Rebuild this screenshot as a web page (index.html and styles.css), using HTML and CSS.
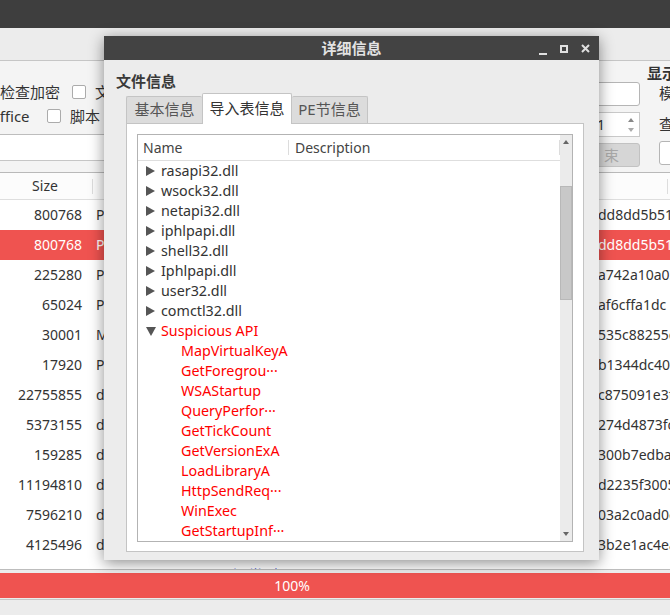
FILE: index.html
```html
<!DOCTYPE html>
<html>
<head>
<meta charset="utf-8">
<link rel="stylesheet" href="styles.css">
</head>
<body>
<div class="app">
  <div class="topbar"></div>
  <div class="toolbar"></div>
  <div class="filters">
    <div class="leftcol">
      <div class="opts">
        <div class="opt-row">
          <span class="lbl l1">检查加密</span><span class="cb"></span><span class="lbl">文件</span>
        </div>
        <div class="opt-row shift">
          <span class="lbl l2">Office</span><span class="cb"></span><span class="lbl">脚本</span>
        </div>
      </div>
      <div class="search"></div>
    </div>
    <div class="ctrlcol">
      <div class="inp"></div>
      <div class="spin"><span class="spinval">1</span><span class="spinarrows"><i class="up"></i><i class="down"></i></span></div>
      <div class="btn">结束</div>
    </div>
    <div class="showcol">
      <div class="gtitle">显示</div>
      <div class="gitem">模式</div>
      <div class="gitem g2">查看</div>
      <div class="gbox"></div>
    </div>
  </div>
  <div class="table">
    <div class="thead">
      <div class="c-size">Size</div>
      <div class="c-type"><span class="hdiv"></span></div>
      <div class="c-hash"><span class="hdiv end"></span></div>
    </div>
    <div class="trow"><div class="c-size">800768</div><div class="c-type">PE32 executable</div><div class="c-hash">dd8dd5b51f</div></div>
    <div class="trow sel"><div class="c-size">800768</div><div class="c-type">PE32 executable</div><div class="c-hash">dd8dd5b51f</div></div>
    <div class="trow"><div class="c-size">225280</div><div class="c-type">PE32 executable</div><div class="c-hash">a742a10a03</div></div>
    <div class="trow"><div class="c-size">65024</div><div class="c-type">PE32 executable</div><div class="c-hash">af6cffa1dc</div></div>
    <div class="trow"><div class="c-size">30001</div><div class="c-type">MS-DOS executable</div><div class="c-hash">535c88255c</div></div>
    <div class="trow"><div class="c-size">17920</div><div class="c-type">PE32 executable</div><div class="c-hash">b1344dc40c</div></div>
    <div class="trow"><div class="c-size">22755855</div><div class="c-type">data</div><div class="c-hash">c875091e3f</div></div>
    <div class="trow"><div class="c-size">5373155</div><div class="c-type">data</div><div class="c-hash">274d4873fc</div></div>
    <div class="trow"><div class="c-size">159285</div><div class="c-type">data</div><div class="c-hash">300b7edba1</div></div>
    <div class="trow"><div class="c-size">11194810</div><div class="c-type">data</div><div class="c-hash">d2235f3005</div></div>
    <div class="trow"><div class="c-size">7596210</div><div class="c-type">data</div><div class="c-hash">03a2c0ad0e</div></div>
    <div class="trow"><div class="c-size">4125496</div><div class="c-type">data</div><div class="c-hash">3b2e1ac4ea</div></div>
    <div class="trow"><div class="c-size"></div><div class="c-type"><span class="blue">可疑类型</span></div><div class="c-hash"></div></div>
  </div>
  <div class="progress"><div class="bar">100%</div></div>
  <div class="status"></div>
</div>

<div class="dialog">
  <div class="dtitle">
    <span class="dname">详细信息</span>
    <span class="wbtns">
      <span class="wmin"></span>
      <span class="wmax"></span>
      <svg class="wclose" width="9" height="9" viewBox="0 0 9 9"><path d="M1 1L8 8M8 1L1 8" stroke="#e0e0e0" stroke-width="2"/></svg>
    </span>
  </div>
  <div class="dbody">
    <div class="dlabel">文件信息</div>
    <div class="tabs">
      <div class="tab t1">基本信息</div>
      <div class="tab t2 active">导入表信息</div>
      <div class="tab t3">PE节信息</div>
    </div>
    <div class="pane">
      <div class="tree">
        <div class="tmain">
          <div class="theader">
            <div class="hname">Name</div>
            <div class="hdesc">Description</div>
          </div>
          <div class="tlist">
            <div class="node"><span class="tri closed"></span>rasapi32.dll</div>
            <div class="node"><span class="tri closed"></span>wsock32.dll</div>
            <div class="node"><span class="tri closed"></span>netapi32.dll</div>
            <div class="node"><span class="tri closed"></span>iphlpapi.dll</div>
            <div class="node"><span class="tri closed"></span>shell32.dll</div>
            <div class="node"><span class="tri closed"></span>Iphlpapi.dll</div>
            <div class="node"><span class="tri closed"></span>user32.dll</div>
            <div class="node"><span class="tri closed"></span>comctl32.dll</div>
            <div class="node red"><span class="tri open"></span>Suspicious API</div>
            <div class="node red child">MapVirtualKeyA</div>
            <div class="node red child">GetForegrou···</div>
            <div class="node red child">WSAStartup</div>
            <div class="node red child">QueryPerfor···</div>
            <div class="node red child">GetTickCount</div>
            <div class="node red child">GetVersionExA</div>
            <div class="node red child">LoadLibraryA</div>
            <div class="node red child">HttpSendReq···</div>
            <div class="node red child">WinExec</div>
            <div class="node red child">GetStartupInf···</div>
          </div>
        </div>
        <div class="vscroll">
          <span class="sarrow sup"></span>
          <div class="strack"><div class="shandle"></div></div>
          <span class="sarrow sdown"></span>
        </div>
      </div>
    </div>
  </div>
</div>
</body>
</html>
```

FILE: styles.css
```css
* { box-sizing: border-box; }
body {
  margin: 0;
  width: 670px;
  height: 615px;
  overflow: hidden;
  position: relative;
  font-family: "Noto Sans", "Noto Sans CJK SC", sans-serif;
  font-size: 14px;
  color: #333;
  background: #ececec;
}
.app { display: flex; flex-direction: column; height: 615px; }
.topbar { height: 28px; flex: none; background: #3e3e3e; }
.toolbar { height: 33px; flex: none; background: #ececec; border-bottom: 1px solid #c6c6c6; }

.filters { height: 111px; flex: none; display: flex; background: #f4f4f4; font-size: 15px; }
.leftcol { width: 565px; flex: none; display: flex; flex-direction: column; }
.opts {
  height: 74px;
  padding-top: 21px;
  border-bottom: 1px solid #bdbdbd;
  display: flex; flex-direction: column; gap: 4px;
}
.opt-row { display: flex; align-items: center; height: 20px; line-height: 20px; white-space: nowrap; }
.opt-row.shift { margin-left: -12px; }
.lbl { flex: none; }
.lbl.l1 { width: 72px; }
.lbl.l2 { width: 59px; }
.cb {
  width: 14px; height: 14px; flex: none;
  border: 1px solid #ababab; border-radius: 2px; background: #fff;
  margin-right: 9px;
}
.search { height: 26px; background: #fff; border-bottom: 1px solid #c6c6c6; }

.ctrlcol { width: 75px; flex: none; padding: 21px 0 0 7px; display: flex; flex-direction: column; gap: 6px; }
.inp { height: 24px; border: 1px solid #b5b5b5; border-radius: 3px; background: #fff; }
.spin {
  height: 25px; border: 1px solid #c9c9c9; background: #fff;
  display: flex; align-items: center; justify-content: space-between;
  padding-left: 24px; line-height: 20px; font-size: 14px;
}
.spinarrows { width: 12px; height: 23px; display: flex; flex-direction: column; justify-content: center; gap: 6px; align-items: center; margin-right: 2px; }
.spinarrows i { display: block; width: 0; height: 0; border-left: 3px solid transparent; border-right: 3px solid transparent; }
.spinarrows .up { border-bottom: 4px solid #888; }
.spinarrows .down { border-top: 4px solid #aaa; }
.btn {
  height: 24px; border: 1px solid #c2c2c2; border-radius: 3px; background: #d6d6d6;
  color: #a8a8a8; text-align: right; line-height: 22px; padding-right: 13px; letter-spacing: 7px;
}
.showcol { flex: none; width: 30px; padding: 2px 0 0 7px; white-space: nowrap; }
.gtitle { font-weight: bold; line-height: 20px; }
.gitem { padding-left: 12px; line-height: 20px; }
.gitem.g2 { margin-top: 11px; }
.gbox { margin: 7px 0 0 12px; width: 40px; height: 24px; border: 1px solid #b5b5b5; border-radius: 3px; background: #fff; }

.table { height: 398px; flex: none; overflow: hidden; background: #fff; border-top: 1px solid #b9b9b9; border-bottom: 1px solid #bdbdbd; }
.thead, .trow { display: flex; }
.thead { height: 27px; line-height: 26px; border-bottom: 1px solid #dedede; background: #fcfcfc; }
.trow { height: 30px; line-height: 30px; white-space: nowrap; }
.trow.sel { background: #ef5350; color: #fff; }
.c-size { width: 92px; text-align: right; padding-right: 10px; flex: none; }
.thead .c-size { text-align: center; padding-right: 2px; }
.c-type { flex: 1; padding-left: 4px; overflow: hidden; position: relative; }
.c-hash { width: 72px; flex: none; overflow: hidden; position: relative; }
.hdiv { position: absolute; left: 0; top: 6px; width: 1px; height: 15px; background: #ddd; }
.hdiv.end { left: 69px; }
.blue { color: #1f3fcf; margin-left: 122px; font-size: 15px; }

.progress { height: 30px; flex: none; padding: 3px 0 1px; background: #ececec; border-bottom: 1px solid #c6c6c6; }
.bar { height: 25px; background: #ef5350; color: #fff; font-size: 14px; line-height: 25px; text-align: center; padding-right: 86px; }
.status { flex: 1; background: #ececec; }

/* dialog */
.dialog {
  position: absolute; left: 104px; top: 36px; width: 495px; height: 524px;
  background: #ececec;
  box-shadow: 0 3px 14px rgba(0,0,0,0.45);
  display: flex; flex-direction: column;
}
.dtitle {
  height: 24px; flex: none; background: #434343;
  display: flex; align-items: center; justify-content: center; position: relative;
}
.dname { color: #e2e2e2; font-weight: bold; font-size: 15px; line-height: 24px; }
.wbtns { position: absolute; right: 9px; top: 8px; display: flex; align-items: flex-end; gap: 13px; height: 9px; }
.wmin { width: 8px; height: 2px; background: #e0e0e0; margin-bottom: -2px; }
.wmax { width: 8px; height: 8px; border: 2px solid #e0e0e0; }
.wclose { display: block; }

.dbody { flex: 1; padding: 11px 15px 18px 12px; display: flex; flex-direction: column; }
.dlabel { font-weight: bold; font-size: 15px; line-height: 20px; height: 20px; color: #3a3a3a; }
.tabs { margin: 2px 0 0 10px; height: 30px; display: flex; align-items: flex-end; position: relative; z-index: 1; font-size: 15px; }
.tab {
  height: 27px; line-height: 25px; text-align: center; color: #555;
  background: #dcdcdc; border: 1px solid #c4c4c4; border-bottom: none;
  border-radius: 2px 2px 0 0;
}
.tab.t1 { width: 76px; border-right: none; }
.tab.t2 { width: 90px; }
.tab.t3 { width: 76px; border-left: none; }
.tab.active { height: 31px; margin-bottom: -1px; background: #fff; color: #333; line-height: 29px; }
.pane {
  margin-left: 10px; flex: 1;
  background: #fff; border: 1px solid #c4c4c4;
  padding: 10px 10px 9px 10px;
  display: flex;
}
.tree { flex: 1; border: 1px solid #b3b3b3; display: flex; overflow: hidden; }
.tmain { flex: 1; display: flex; flex-direction: column; overflow: hidden; }
.theader { height: 26px; flex: none; display: flex; border-bottom: 1px solid #dedede; color: #444; }
.hname { width: 151px; padding-left: 5px; border-right: 1px solid #dcdcdc; margin: 5px 0; line-height: 15px; }
.hdesc { flex: 1; padding-left: 6px; border-right: 1px solid #dcdcdc; margin: 5px 0; line-height: 15px; }
.tlist { flex: 1; overflow: hidden; font-size: 14.3px; }
.node { height: 20px; line-height: 20px; padding-left: 8px; white-space: nowrap; color: #333; display: flex; align-items: center; }
.node.red { color: #ff0000; }
.node.child { padding-left: 43px; }
.tri { display: inline-block; width: 0; height: 0; margin-right: 6px; flex: none; }
.tri.closed { border-left: 9px solid #555; border-top: 5px solid transparent; border-bottom: 5px solid transparent; }
.tri.open { border-top: 9px solid #555; border-left: 5px solid transparent; border-right: 5px solid transparent; margin-right: 5px; }
.vscroll { width: 12px; flex: none; background: #ebebeb; display: flex; flex-direction: column; align-items: center; }
.sarrow { width: 0; height: 0; border-left: 3px solid transparent; border-right: 3px solid transparent; flex: none; }
.sup { border-bottom: 4px solid #666; margin: 5px 0 6px; }
.sdown { border-top: 4px solid #666; margin: 5px 0 5px; }
.strack { flex: 1; width: 12px; padding-top: 36px; }
.shandle { height: 114px; background: #c8c8c8; border: 1px solid #b8b8b8; }
```
